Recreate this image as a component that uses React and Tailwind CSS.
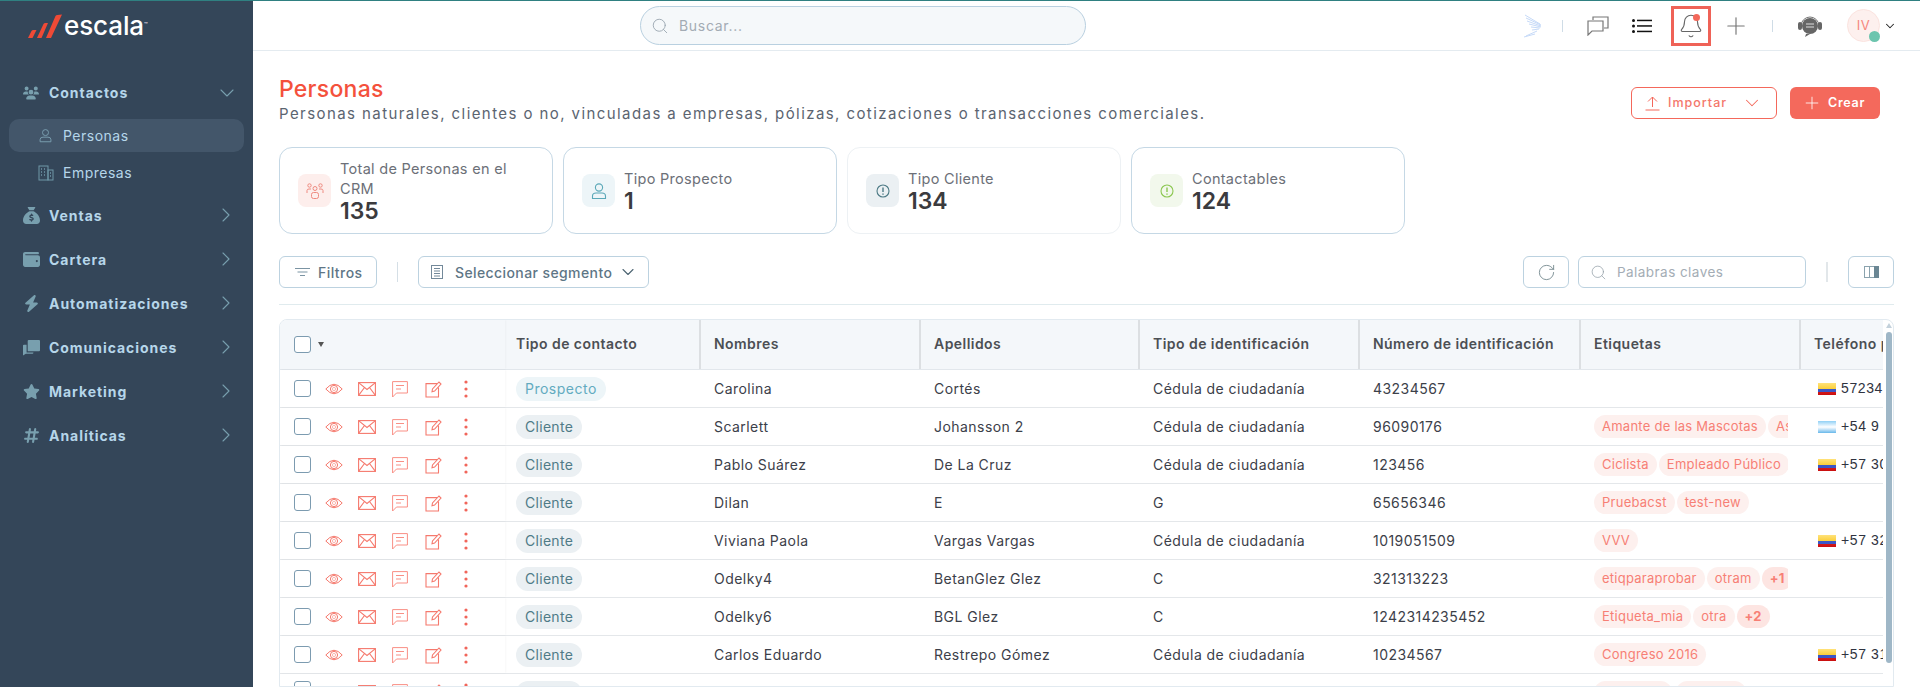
import React from "react";
import { FaUsers, FaSackDollar, FaWallet, FaBolt, FaStar, FaHashtag } from "react-icons/fa6";
import { ChevronDown, ChevronRight, Search, RotateCw, Plus, Bell } from "lucide-react";

const ff = { fontFamily: "Inter, 'Noto Sans', sans-serif" };

function Logo() {
  return (
    <div className="flex items-end h-[24px]">
      <svg width="36" height="25" viewBox="0 0 36 25" className="mr-[1px]">
        <path d="M1 24 L4.5 17 Q5 16 6.5 16 L9.5 16 L5.5 24 Z" fill="#ef4a36" />
        <path d="M10 24 L16.5 10 Q17 9 18.5 9 L21 9 L14.5 24 Z" fill="#ef4a36" />
        <path d="M19 24 L28.5 2 Q29 1 30.5 1 L35 0.5 L24 24 Z" fill="#ef4a36" />
      </svg>
      <span className="text-white text-[26px] leading-[26px] font-medium tracking-[-0.1px]">escala</span>
      <span className="text-white text-[6px] leading-[6px] self-start mt-[7px]">™</span>
    </div>
  );
}

function UserIcon({ c, s = 18 }) {
  return (
    <svg width={s} height={s} viewBox="0 0 18 18" fill="none" stroke={c} strokeWidth="1.1">
      <circle cx="9" cy="5.5" r="3.6" />
      <path d="M2.5 16.5 V14 Q2.5 11 6 11 H12 Q15.5 11 15.5 14 V16.5 Z" />
    </svg>
  );
}

function BuildingIcon() {
  return (
    <svg width="16" height="16" viewBox="0 0 16 16" fill="none" stroke="#6f97a8" strokeWidth="1">
      <rect x="1" y="1" width="9" height="14" />
      <rect x="10" y="5" width="5" height="10" />
      <path d="M3 4h1M6 4h1M3 7h1M6 7h1M3 10h1M6 10h1M12 8h1M12 11h1" strokeWidth="1.3" />
    </svg>
  );
}

function Bubbles({ className }) {
  return (
    <svg className={className} viewBox="0 0 18 17" fill="currentColor">
      <path d="M5 1.5 Q5 0.5 6 0.5 H17 Q18 0.5 18 1.5 V11.5 Q18 12.5 17 12.5 H5 Z" />
      <path d="M0 6.5 Q0 5.5 1 5.5 H3.8 V13.8 H11 V14 Q11 15 10 15 H3 L0 17 Z" />
    </svg>
  );
}

const side = [
  ["Ventas", FaSackDollar],
  ["Cartera", FaWallet],
  ["Automatizaciones", FaBolt],
  ["Comunicaciones", Bubbles],
  ["Marketing", FaStar],
  ["Analíticas", FaHashtag],
];

function Sidebar() {
  return (
    <aside className="w-[253px] shrink-0 bg-[#344659] flex flex-col">
      <div className="h-[50px] pl-[27px] pt-[14px] shrink-0"><Logo /></div>
      <div className="h-[43px] mt-[20px] pl-[23px] pr-[14px] flex items-center shrink-0">
        <FaUsers className="text-[#789fae] w-[16px] h-[16px]" />
        <span className="ml-[10px] flex-1 text-[14px] font-bold tracking-[0.95px] text-[#b6d6ea]">Contactos</span>
        <ChevronDown className="w-[24px] h-[24px] text-[#789fae]" strokeWidth={1.1} />
      </div>
      <div className="mx-[9px] mt-[5px] h-[33px] rounded-[10px] bg-[#43566a] flex items-center pl-[29px] shrink-0">
        <UserIcon c="#7da2b3" s={15} />
        <span className="ml-[10px] text-[14px] tracking-[0.5px] text-[#b6d6ea]">Personas</span>
      </div>
      <div className="mx-[9px] mt-[4px] h-[33px] flex items-center pl-[29px] shrink-0">
        <BuildingIcon />
        <span className="ml-[9px] text-[14px] tracking-[0.5px] text-[#b6d6ea]">Empresas</span>
      </div>
      <div className="mt-[4px] flex flex-col">
        {side.map(([t, I]) => (
          <div key={t} className="h-[44px] pl-[23px] pr-[15px] flex items-center">
            <span className="w-[17px] flex justify-center"><I className="text-[#789fae] w-[17px] h-[17px]" /></span>
            <span className="ml-[9px] flex-1 text-[14px] font-bold tracking-[0.95px] text-[#b6d6ea]">{t}</span>
            <ChevronRight className="w-[24px] h-[24px] text-[#789fae]" strokeWidth={1.1} />
          </div>
        ))}
      </div>
    </aside>
  );
}

function Wing() {
  return (
    <svg width="20" height="24" viewBox="0 0 20 24" fill="none" stroke="#c6daf8" strokeWidth="1">
      <path d="M2 1 L17 10" /><path d="M3 4 L18 11" /><path d="M4 7 L18 12" /><path d="M6 10 L18 13" />
      <path d="M8 13 L17 14" /><path d="M9 16 L16 15" /><path d="M3 22 L14 17" /><path d="M1 23 L12 20" />
    </svg>
  );
}

function TopBar() {
  return (
    <header className="h-[50px] shrink-0 border-b border-[#e4ebf0] flex items-center relative">
      <div className="ml-[387px] w-[446px] h-[39px] rounded-full border border-[#b9d0e0] bg-[#f5f8fa] flex items-center pl-[10px]">
        <Search className="w-[18px] h-[18px] text-[#9aa6b0]" strokeWidth={1.2} />
        <span className="ml-[10px] text-[14px] tracking-[0.7px] text-[#a3abb4]">Buscar...</span>
      </div>
      <div className="ml-[437px] flex items-center"><Wing /></div>
      <div className="ml-[19px] w-[1px] h-[12px] bg-[#cfdce6]" />
      <svg className="ml-[24px]" width="22" height="20" viewBox="0 0 22 20" fill="none" stroke="#777" strokeWidth="1.2">
        <path d="M6 4 V1 H21 V12 H17" /><path d="M1 5 H16 V15 H5 L1 19 Z" />
      </svg>
      <svg className="ml-[23px]" width="20" height="14" viewBox="0 0 20 14" fill="#111">
        <rect x="0" y="0" width="3" height="3" rx="1.5" /><rect x="0" y="5.5" width="3" height="3" rx="1.5" /><rect x="0" y="11" width="3" height="3" rx="1.5" />
        <rect x="5" y="0.7" width="15" height="1.5" /><rect x="5" y="6.2" width="15" height="1.5" /><rect x="5" y="11.7" width="15" height="1.5" />
      </svg>
      <div className="ml-[19px] w-[40px] h-[40px] border-[3px] border-[#ef6257] flex items-center justify-center relative">
        <Bell className="w-[26px] h-[26px] text-[#666]" strokeWidth={1} />
        <span className="absolute top-[5px] right-[8px] w-[7px] h-[7px] rounded-full bg-[#f3685a]" />
      </div>
      <Plus className="ml-[11px] w-[28px] h-[28px] text-[#777]" strokeWidth={1} />
      <div className="ml-[22px] w-[1px] h-[12px] bg-[#cfdce6]" />
      <svg className="ml-[24px]" width="26" height="24" viewBox="0 0 26 24" fill="none">
        <path d="M4 12 A9 9 0 0 1 22 12" stroke="#777" strokeWidth="1" />
        <rect x="1" y="8" width="4" height="8" rx="2" fill="#666" />
        <rect x="21" y="8" width="4" height="8" rx="2" fill="#666" />
        <circle cx="13" cy="12" r="8" fill="#666" />
        <path d="M9 20 L8 23 L13 20 Z" fill="#666" />
        <path d="M9 10H17M9 13H17" stroke="#ddd" strokeWidth="1" />
      </svg>
      <div className="ml-[24px] relative w-[33px] h-[33px] rounded-full bg-[#fdf0ee] border border-[#fbe3df] flex items-center justify-center">
        <span className="text-[13px] text-[#f5877c] tracking-[0.4px]">IV</span>
        <span className="absolute -right-[1px] -bottom-[1px] w-[11px] h-[11px] rounded-full bg-[#6cc5ae]" />
      </div>
      <ChevronDown className="ml-[3px] w-[14px] h-[14px] text-[#222]" strokeWidth={1.8} />
    </header>
  );
}

function PeopleIcon() {
  return (
    <svg width="18" height="18" viewBox="0 0 18 18" fill="none" stroke="#ef8a80" strokeWidth="1">
      <circle cx="9" cy="6.5" r="2" /><rect x="5.5" y="10.5" width="7" height="6" rx="2" />
      <circle cx="3.5" cy="3.5" r="1.7" /><circle cx="14.5" cy="3.5" r="1.7" />
      <path d="M1 11 V8.5 Q1 7 3 7 H5 M17 11 V8.5 Q17 7 15 7 H13" />
    </svg>
  );
}

function Info({ c }) {
  return (
    <svg width="14" height="14" viewBox="0 0 14 14" fill="none" stroke={c} strokeWidth="1.1">
      <circle cx="7" cy="7" r="6" /><path d="M7 3.5 V8" strokeWidth="1.4" /><path d="M7 9.6 V10.8" strokeWidth="1.4" />
    </svg>
  );
}

function Card({ label, value, bg, icon, border = "border-[#c5d8e5]" }) {
  return (
    <div className={"w-[274px] h-[87px] rounded-[13px] border bg-white flex items-center pl-[18px] " + border}>
      <div className={"w-[33px] h-[33px] rounded-[8px] flex items-center justify-center shrink-0 " + bg}>{icon}</div>
      <div className="ml-[9px] w-[190px]">
        <div className="text-[14.5px] leading-[20px] tracking-[0.3px] text-[#6c7078]">{label}</div>
        <div className="text-[23px] leading-[24px] font-semibold text-[#3b3b3e]">{value}</div>
      </div>
    </div>
  );
}

function Toolbar() {
  return (
    <div className="mt-[22px] h-[32px] flex items-center shrink-0">
      <div className="w-[98px] h-[32px] rounded-[6px] border border-[#bcd2e0] flex items-center pl-[15px]">
        <svg width="15" height="10" viewBox="0 0 15 10" stroke="#7b94a3" strokeWidth="1"><path d="M0 1.5H15M2.5 5H12.5M5 8.5H10" /></svg>
        <span className="ml-[8px] text-[14px] font-medium tracking-[0.45px] text-[#5e7686]">Filtros</span>
      </div>
      <div className="ml-[20px] w-[1px] h-[20px] bg-[#d5dfe6]" />
      <div className="ml-[20px] w-[231px] h-[32px] rounded-[6px] border border-[#bcd2e0] flex items-center pl-[12px]">
        <svg width="12" height="14" viewBox="0 0 12 14" fill="none" stroke="#73899a" strokeWidth="1"><rect x="0.5" y="0.5" width="11" height="13" /><path d="M3 3.5H9M3 6H9M3 8.5H9M3 11H9" /></svg>
        <span className="ml-[12px] text-[14px] font-medium tracking-[0.4px] text-[#5e7686]">Seleccionar segmento</span>
        <ChevronDown className="ml-[6px] w-[20px] h-[20px] text-[#4c6472]" strokeWidth={1.3} />
      </div>
      <div className="ml-auto w-[46px] h-[32px] rounded-[6px] border border-[#bcd2e0] flex items-center justify-center">
        <RotateCw className="w-[19px] h-[19px] text-[#62797f]" strokeWidth={1} />
      </div>
      <div className="ml-[9px] w-[228px] h-[32px] rounded-[6px] border border-[#bcd2e0] flex items-center pl-[11px]">
        <Search className="w-[17px] h-[17px] text-[#8d9aa3]" strokeWidth={1} />
        <span className="ml-[10px] text-[13.5px] tracking-[0.45px] text-[#a4adb5]">Palabras claves</span>
      </div>
      <div className="ml-[20px] w-[2px] h-[20px] bg-[#e2e7ea]" />
      <div className="ml-[20px] w-[46px] h-[32px] rounded-[6px] border border-[#bcd2e0] flex items-center justify-center">
        <svg width="15" height="12" viewBox="0 0 15 12"><rect x="0.5" y="0.5" width="14" height="11" fill="none" stroke="#8ba3ae" /><rect x="10" y="0" width="5" height="12" fill="#6b8794" /><path d="M5.5 0V12" stroke="#8ba3ae" /></svg>
      </div>
    </div>
  );
}

function RowIcons() {
  const c = "#f5796d";
  return (
    <div className="flex items-center h-[20px] ml-[14px] mt-[1px]">
      <svg width="18" height="14" viewBox="0 0 18 14" fill="none" stroke={c} strokeWidth="1"><path d="M0.8 7 Q9 -2.5 17.2 7 Q9 16.5 0.8 7 Z" /><circle cx="9" cy="7" r="3.6" /><circle cx="9" cy="7" r="1.6" stroke="#fbb7b0" /></svg>
      <svg className="ml-[15px]" width="18" height="14" viewBox="0 0 18 14" fill="none" stroke={c} strokeWidth="1.1"><rect x="0.6" y="0.6" width="16.8" height="12.8" /><path d="M0.6 0.6 L9 7.5 L17.4 0.6 M0.6 13.4 L6.5 5.5 M17.4 13.4 L11.5 5.5" /></svg>
      <svg className="ml-[16px]" width="16" height="17" viewBox="0 0 16 17" fill="none" stroke="#f98f85" strokeWidth="1"><path d="M0.6 16 V0.6 H15.4 V12 H4.5 Z" /><path d="M4 4.5H12M4 8H9" /></svg>
      <svg className="ml-[17px]" width="17" height="17" viewBox="0 0 17 17" fill="none" stroke={c} strokeWidth="1.1"><path d="M12 2.6 H1 V16 H13.5 V6.5" /><path d="M7 10.8 L7.5 8 L14 1 L16 3 L9.6 10 Z" /></svg>
      <svg className="ml-[22px]" width="4" height="18" viewBox="0 0 4 18" fill="#f1655a"><circle cx="2" cy="2" r="1.6" /><circle cx="2" cy="9" r="1.6" /><circle cx="2" cy="16" r="1.6" /></svg>
    </div>
  );
}

function Check() {
  return <span className="block w-[17px] h-[17px] rounded-[3px] border border-[#7c9bb0] bg-white shrink-0" />;
}

function Flag({ kind }) {
  const cls = kind === "ar"
    ? "bg-gradient-to-b from-[#8fd0f5] via-[#ffffff] to-[#66b8ea]"
    : "bg-[linear-gradient(180deg,#ffe27a_0%,#fbcf3c_48%,#3a57c8_50%,#3a57c8_74%,#d31818_76%,#c90f0f_100%)]";
  return <span className={"block w-[18px] h-[12px] shrink-0 " + cls} />;
}

function Tag({ t, strong }) {
  return (
    <span className={"h-[23px] rounded-full flex items-center justify-center px-[8px] shrink-0 text-[13px] tracking-[0.25px] text-[#f77f75] " + (strong ? "bg-[#fde5e2] font-bold" : "bg-[#fdf0ee]")}>{t}</span>
  );
}

const rows = [
  ["p", "Carolina", "Cortés", "Cédula de ciudadanía", "43234567", [], "co", "572341"],
  ["c", "Scarlett", "Johansson 2", "Cédula de ciudadanía", "96090176", ["Amante de las Mascotas", "Asociado"], "ar", "+54 9"],
  ["c", "Pablo Suárez", "De La Cruz", "Cédula de ciudadanía", "123456", ["Ciclista", "Empleado Público", "Otro"], "co", "+57 300"],
  ["c", "Dilan", "E", "G", "65656346", ["Pruebacst", "test-new"], null, ""],
  ["c", "Viviana Paola", "Vargas Vargas", "Cédula de ciudadanía", "1019051509", ["VVV"], "co", "+57 320"],
  ["c", "Odelky4", "BetanGlez Glez", "C", "321313223", ["etiqparaprobar", "otram", "+1"], null, ""],
  ["c", "Odelky6", "BGL Glez", "C", "1242314235452", ["Etiqueta_mia", "otra", "+2"], null, ""],
  ["c", "Carlos Eduardo", "Restrepo Gómez", "Cédula de ciudadanía", "10234567", ["Congreso 2016"], "co", "+57 310"],
];

const heads = [
  ["Tipo de contacto", "w-[196px] pl-[11px]"],
  ["Nombres", "w-[220px] pl-[13px]"],
  ["Apellidos", "w-[219px] pl-[13px]"],
  ["Tipo de identificación", "w-[220px] pl-[13px]"],
  ["Número de identificación", "w-[221px] pl-[13px]"],
  ["Etiquetas", "w-[220px] pl-[13px]"],
  ["Teléfono principal", "w-[220px] pl-[13px]"],
];

const cell = "text-[14px] tracking-[0.45px] text-[#3c4049] whitespace-nowrap";

function Table() {
  return (
    <div className="mt-[14px] relative rounded-t-[8px] border border-[#e2eaf0] overflow-hidden flex-1">
      <div className="absolute right-[1px] top-[1px] bottom-0 w-[7px] z-10">
        <div className="mx-auto mt-[2px] w-0 h-0 border-x-[3px] border-x-transparent border-b-[5px] border-b-[#c3d1db]" />
        <div className="absolute top-[11px] left-[1px] w-[6px] h-[331px] rounded-[3px] bg-[#9fb7c7]" />
      </div>
      <div className="mr-[10px] overflow-hidden">
        <div className="flex h-[50px] bg-[#f4f7fa] border-b border-[#e2e7ec] w-max">
          <div className="w-[225px] pl-[14px] flex items-center shadow-[1px_0_2px_rgba(0,0,0,0.03)]">
            <Check />
            <span className="ml-[7px] w-0 h-0 border-x-[3.5px] border-x-transparent border-t-[5px] border-t-[#555]" />
          </div>
          {heads.map(([h, w], i) => (
            <div key={h} className={w + " flex items-center pb-[2px] text-[14px] font-semibold tracking-[0.45px] text-[#4c4f54] whitespace-nowrap " + (i < heads.length - 1 ? "border-r-2 border-[#dcdfe2]" : "")}>{h}</div>
          ))}
        </div>
        {rows.map((r, i) => (
          <div key={i} className="flex h-[38px] border-b border-[#e4e7ea] items-center w-max">
            <div className="w-[225px] pl-[14px] flex items-center h-full shadow-[1px_0_2px_rgba(0,0,0,0.03)]">
              <Check /><RowIcons />
            </div>
            <div className="w-[196px] pl-[11px]">
              {r[0] === "p"
                ? <span className="inline-flex items-center h-[24px] px-[9px] rounded-full bg-[#edf5f8] text-[14px] tracking-[0.5px] text-[#62abc0]">Prospecto</span>
                : <span className="inline-flex items-center h-[24px] px-[9px] rounded-full bg-[#ebf0f3] text-[14px] tracking-[0.3px] text-[#4f7b87]">Cliente</span>}
            </div>
            <div className={"w-[220px] pl-[13px] " + cell}>{r[1]}</div>
            <div className={"w-[219px] pl-[13px] " + cell}>{r[2]}</div>
            <div className={"w-[220px] pl-[13px] " + cell}>{r[3]}</div>
            <div className={"w-[221px] pl-[13px] " + cell}>{r[4]}</div>
            <div className="w-[220px] pl-[13px]">
              <div className="w-[194px] overflow-hidden flex gap-[2px]">
                {r[5].map((t) => <Tag key={t} t={t} strong={t[0] === "+"} />)}
              </div>
            </div>
            <div className="w-[220px] pl-[17px] flex items-center">
              {r[6] && <Flag kind={r[6]} />}
              <span className="ml-[5px] text-[14px] tracking-[0.6px] text-[#2f3340] whitespace-pre" style={{ fontFamily: "'Liberation Sans', sans-serif" }}>{r[7]}</span>
            </div>
          </div>
        ))}
        <div className="flex h-[38px] items-start pt-[7px] w-max">
          <div className="w-[225px] pl-[14px] flex items-start"><Check /><RowIcons /></div>
          <div className="w-[196px] pl-[11px]"><span className="block w-[66px] h-[24px] rounded-full bg-[#ebf0f3]" /></div>
          <div className="w-[880px]" />
          <div className="w-[220px] pl-[13px] flex gap-[4px]">
            <span className="block w-[78px] h-[23px] rounded-full bg-[#fdf0ee]" />
            <span className="block w-[70px] h-[23px] rounded-full bg-[#fdf0ee]" />
          </div>
        </div>
      </div>
    </div>
  );
}

export default function App() {
  return (
    <div className="h-[687px] w-[1920px] overflow-hidden flex flex-col bg-white" style={ff}>
      <div className="h-[1px] bg-[#2f8081] shrink-0" />
      <div className="flex flex-1 min-h-0">
        <Sidebar />
        <main className="flex-1 min-w-0 flex flex-col">
          <TopBar />
          <div className="flex-1 min-h-0 flex flex-col pl-[26px] pr-[26px]">
            <div className="flex items-start pt-[25px] h-[96px] shrink-0">
              <div className="flex-1">
                <h1 className="text-[23px] leading-[27px] font-medium tracking-[0.25px] text-[#f4513c]">Personas</h1>
                <p className="mt-[1px] text-[15px] leading-[20px] tracking-[1.42px] text-[#5b6470]">Personas naturales, clientes o no, vinculadas a empresas, pólizas, cotizaciones o transacciones comerciales.</p>
              </div>
              <div className="flex items-center mt-[11px] mr-[14px]">
                <div className="w-[146px] h-[32px] rounded-[6px] border border-[#f4685b] flex items-center pl-[13px]">
                  <svg width="15" height="15" viewBox="0 0 15 15" fill="none" stroke="#f4685b" strokeWidth="1"><path d="M7.5 11V1M3 5.5L7.5 1L12 5.5M0.5 14H14.5" /></svg>
                  <span className="ml-[8px] text-[12.5px] font-medium tracking-[1px] text-[#f4776b]">Importar</span>
                  <ChevronDown className="ml-[14px] w-[22px] h-[22px] text-[#f4685b]" strokeWidth={1.1} />
                </div>
                <div className="ml-[13px] w-[90px] h-[32px] rounded-[6px] bg-[#f4695c] flex items-center pl-[12px]">
                  <Plus className="w-[20px] h-[20px] text-white" strokeWidth={1} />
                  <span className="ml-[6px] text-[12.5px] font-semibold tracking-[0.7px] text-white">Crear</span>
                </div>
              </div>
            </div>
            <div className="flex gap-[10px] shrink-0">
              <Card label="Total de Personas en el CRM" value="135" bg="bg-[#fdeeec]" icon={<PeopleIcon />} />
              <Card label="Tipo Prospecto" value="1" bg="bg-[#edf5f8]" icon={<UserIcon c="#5ba8b8" />} />
              <Card label="Tipo Cliente" value="134" bg="bg-[#ebf0f3]" icon={<Info c="#4d7a85" />} border="border-[#edf1f4]" />
              <Card label="Contactables" value="124" bg="bg-[#f2f8ec]" icon={<Info c="#8cc751" />} />
            </div>
            <Toolbar />
            <div className="mt-[16px] h-[1px] bg-[#e0ebee] shrink-0" />
            <Table />
          </div>
        </main>
      </div>
    </div>
  );
}
